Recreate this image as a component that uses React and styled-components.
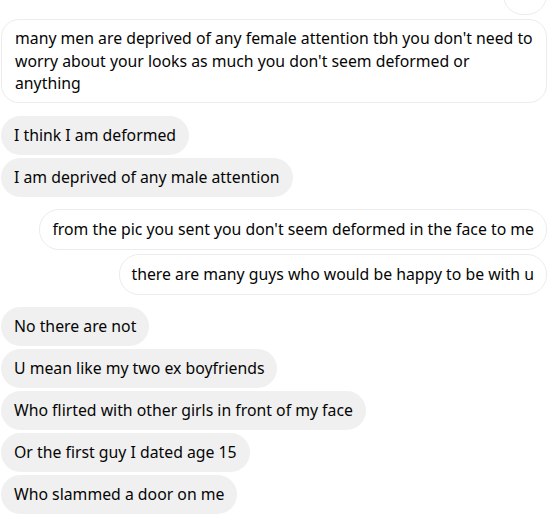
import React from 'react';
import styled, { createGlobalStyle } from 'styled-components';

const GlobalStyle = createGlobalStyle`
  html, body {
    margin: 0;
    padding: 0;
    background: #fff;
    overflow: hidden;
  }
  body {
    font-family: "Noto Sans", "Open Sans", sans-serif;
    color: #050505;
  }
`;

const Thread = styled.div`
  width: 548px;
  height: 519px;
  overflow: hidden;
  box-sizing: border-box;
  padding: 0 1px;
  display: flex;
  flex-direction: column;
`;

const Group = styled.div`
  display: flex;
  flex-direction: column;
  align-items: ${p => (p.$mine ? 'flex-end' : 'flex-start')};
  gap: ${p => (p.$mine ? '4px' : '3px')};
  margin-bottom: 12px;

  &:first-child {
    margin-top: -26px;
    margin-bottom: 13px;
  }
`;

const Bubble = styled.div`
  box-sizing: border-box;
  max-width: 100%;
  padding: ${p => (p.$mine ? '8px 12px' : '8px 13px')};
  font-size: 15.8px;
  line-height: 23px;
  border-radius: 20px;
  background: ${p => (p.$mine ? '#fff' : '#f0f0f0')};
  border: ${p => (p.$mine ? '1px solid #ececec' : 'none')};
  ${p => p.$wide && 'border-radius: 18px; width: 100%; padding: 7px 12px 7px 13px; line-height: 22.5px;'}
  ${p => p.$stub && 'width: 44px;'}
`;

const groups = [
  {
    mine: true,
    msgs: [
      { stub: true, text: '\u00a0' },
      {
        wide: true,
        text: "many men are deprived of any female attention tbh you don't need to worry about your looks as much you don't seem deformed or anything",
      },
    ],
  },
  { mine: false, msgs: ['I think I am deformed', 'I am deprived of any male attention'] },
  {
    mine: true,
    msgs: [
      "from the pic you sent you don't seem deformed in the face to me",
      'there are many guys who would be happy to be with u',
    ],
  },
  {
    mine: false,
    msgs: [
      'No there are not',
      'U mean like my two ex boyfriends',
      'Who flirted with other girls in front of my face',
      'Or the first guy I dated age 15',
      'Who slammed a door on me',
    ],
  },
];

export default function App() {
  return (
    <>
      <GlobalStyle />
      <Thread>
        {groups.map((g, i) => (
          <Group key={i} $mine={g.mine}>
            {g.msgs.map((m, j) => {
              const msg = typeof m === 'string' ? { text: m } : m;
              return (
                <Bubble key={j} $mine={g.mine} $wide={msg.wide} $stub={msg.stub}>
                  {msg.text}
                </Bubble>
              );
            })}
          </Group>
        ))}
      </Thread>
    </>
  );
}
